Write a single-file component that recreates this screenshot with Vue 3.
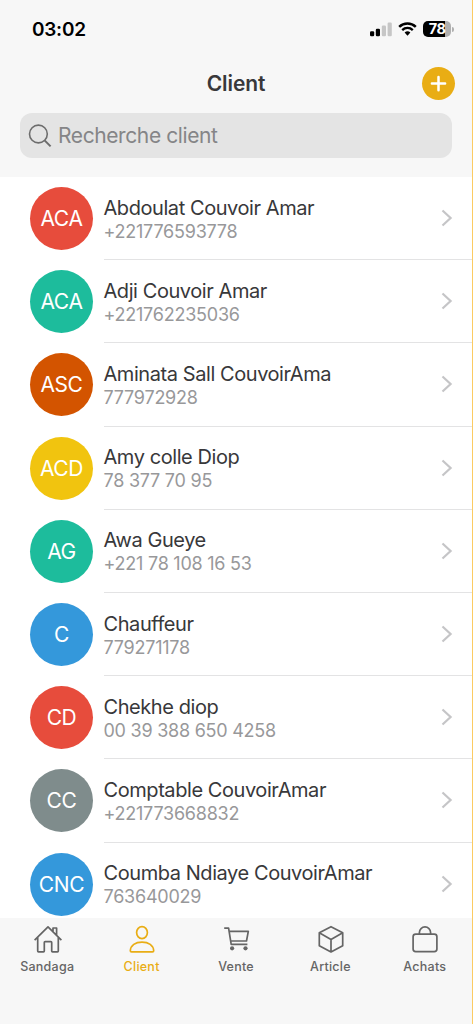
<script setup>
const clients = [
  { initials: 'ACA', name: 'Abdoulat Couvoir Amar', phone: '+221776593778', tone: 'red' },
  { initials: 'ACA', name: 'Adji Couvoir Amar', phone: '+221762235036', tone: 'green' },
  { initials: 'ASC', name: 'Aminata Sall CouvoirAma', phone: '777972928', tone: 'orange' },
  { initials: 'ACD', name: 'Amy colle Diop', phone: '78 377 70 95', tone: 'yellow' },
  { initials: 'AG', name: 'Awa Gueye', phone: '+221 78 108 16 53', tone: 'green' },
  { initials: 'C', name: 'Chauffeur', phone: '779271178', tone: 'blue' },
  { initials: 'CD', name: 'Chekhe diop', phone: '00 39 388 650 4258', tone: 'red' },
  { initials: 'CC', name: 'Comptable CouvoirAmar', phone: '+221773668832', tone: 'gray' },
  { initials: 'CNC', name: 'Coumba Ndiaye CouvoirAmar', phone: '763640029', tone: 'blue' },
]
</script>

<template>
  <div class="screen">
    <header class="top">
      <div class="status">
        <span class="time">03:02</span>
        <div class="indicators">
          <svg class="signal" width="22" height="15" viewBox="0 0 22 15">
            <rect x="0" y="9.3" width="4.2" height="4.9" rx="1.2" fill="#000" />
            <rect x="5.8" y="6.8" width="4.2" height="7.4" rx="1.2" fill="#000" />
            <rect x="11.8" y="3.6" width="4.2" height="10.6" rx="1.2" fill="#c6c6c6" />
            <rect x="17.6" y="0.5" width="4.2" height="13.7" rx="1.2" fill="#c6c6c6" />
          </svg>
          <svg class="wifi" width="19" height="14" viewBox="0 0 19 14">
            <path d="M1.2 4.9a12 12 0 0 1 16.6 0" fill="none" stroke="#000" stroke-width="2.5" />
            <path d="M4.2 8.1a7.6 7.6 0 0 1 10.6 0" fill="none" stroke="#000" stroke-width="2.3" />
            <path d="M6.6 10.6a4.3 4.3 0 0 1 5.8 0L9.5 13.7Z" fill="#000" />
          </svg>
          <div class="battery"><span class="level">78</span></div>
          <span class="tip"></span>
        </div>
      </div>
      <div class="titlebar">
        <h1>Client</h1>
        <button class="add" aria-label="Ajouter">
          <svg width="33" height="33" viewBox="0 0 33 33"><path d="M16.5 10v13.2M9.9 16.6h13.2" stroke="#fff" stroke-width="2.5" stroke-linecap="round" /></svg>
        </button>
      </div>
      <div class="search">
        <svg width="24" height="24" viewBox="0 0 24 24" fill="none" stroke="#6d6d6d" stroke-width="1.6">
          <circle cx="10.4" cy="10" r="8.9" />
          <path d="M16.6 16.4l6 6" stroke-width="2" />
        </svg>
        <span>Recherche client</span>
      </div>
    </header>

    <main class="list">
      <div v-for="client in clients" :key="client.name" class="row">
        <div class="avatar" :class="client.tone">{{ client.initials }}</div>
        <div class="body">
          <div>
            <div class="name">{{ client.name }}</div>
            <div class="phone">{{ client.phone }}</div>
          </div>
          <svg class="chevron" width="12" height="18" viewBox="0 0 12 18"><path d="M1.5 1.5L9.6 9l-8.1 7.5" fill="none" stroke="#c5c5c7" stroke-width="2.2" /></svg>
        </div>
      </div>
    </main>

    <nav class="tabs">
      <div class="tab">
        <svg width="30" height="30" viewBox="0 0 30 30">
          <path d="M1.6 15.1L15 1.9l13.4 13.2M4.7 12.5v13.6q0 .8.8.8h5q.8 0 .8-.8V17.5q0-.8.8-.8h5.8q.8 0 .8.8v8.6q0 .8.8.8h5q.8 0 .8-.8V12.5M20 6.3V3h3.6v7.1" />
        </svg>
        <span>Sandaga</span>
      </div>
      <div class="tab active">
        <svg width="30" height="30" viewBox="0 0 30 30">
          <ellipse cx="15" cy="7.6" rx="5.4" ry="6" />
          <path d="M3.3 25.8C3.6 20.4 8.4 17.1 15 17.1s11.4 3.3 11.7 8.7q0 1.1-1.2 1.1h-21q-1.2 0-1.2-1.1Z" />
        </svg>
        <span>Client</span>
      </div>
      <div class="tab">
        <svg width="30" height="30" viewBox="0 0 30 30">
          <path d="M2.2 3.2h4.4l2.6 16.2h16.2M7.1 6.3h19.2l-1.8 9.7H8.7" />
          <circle class="wheel" cx="10.1" cy="23.3" r="2.1" />
          <circle class="wheel" cx="23.5" cy="23.3" r="2.1" />
        </svg>
        <span>Vente</span>
      </div>
      <div class="tab">
        <svg width="30" height="30" viewBox="0 0 30 30">
          <path d="M15 1.7l11.7 6.1v12.9L15 27 3.3 20.7V7.8ZM3.3 7.8L15 14.4l11.7-6.6M15 14.4V27" />
        </svg>
        <span>Article</span>
      </div>
      <div class="tab">
        <svg width="30" height="30" viewBox="0 0 30 30">
          <rect x="3.1" y="9.2" width="23.8" height="17.4" rx="2.6" />
          <path d="M9.4 9.2V7.5a5.6 5.6 0 0 1 11.2 0v1.7" />
        </svg>
        <span>Achats</span>
      </div>
    </nav>
  </div>
</template>

<style>
body { margin: 0; }
</style>

<style scoped>
.screen {
  box-sizing: border-box;
  width: 473px;
  height: 1024px;
  display: flex;
  flex-direction: column;
  overflow: hidden;
  background: #fff;
  border-right: 1px solid #fbcb62;
  font-family: Inter, "Liberation Sans", sans-serif;
  color: #38383a;
}
.top { flex: none; height: 177px; background: #f7f7f7; }
.status {
  height: 58px;
  padding: 0 18px 0 32px;
  display: flex;
  align-items: center;
  justify-content: space-between;
}
.time { color: #000; font-size: 19px; font-weight: 600; letter-spacing: -0.25px; }
.indicators { display: flex; align-items: center; }
.wifi { margin-left: 6px; }
.battery {
  width: 28px;
  height: 16px;
  margin-left: 6px;
  border-radius: 5px;
  background: linear-gradient(90deg, #000 78%, #b0b0b0 78%);
  color: #fff;
  text-align: center;
}
.level { display: block; font-size: 14.5px; line-height: 16px; font-weight: 700; letter-spacing: -0.5px; }
.tip { width: 2px; height: 5px; margin-left: 1px; border-radius: 0 2px 2px 0; background: #b0b0b0; }
.titlebar {
  box-sizing: border-box;
  height: 55px;
  padding: 0 17px 4px;
  display: grid;
  grid-template-columns: 33px 1fr 33px;
  align-items: center;
}
h1 { grid-column: 2; margin: 0; text-align: center; font-size: 21px; line-height: 24px; font-weight: 600; letter-spacing: -0.1px; }
.add { width: 33px; height: 33px; padding: 0; border: 0; border-radius: 50%; background: #e9ad14; }
.add svg { display: block; }
.search {
  box-sizing: border-box;
  width: 432px;
  height: 45px;
  margin: 0 0 0 20px;
  padding-left: 8px;
  display: flex;
  align-items: center;
  gap: 6px;
  border-radius: 12px;
  background: #e4e4e4;
  color: #858587;
  font-size: 21px;
  letter-spacing: -0.4px;
}
.list { flex: none; height: 741px; overflow: hidden; }
.row { height: 83.2px; padding-left: 30px; display: flex; gap: 10.5px; }
.avatar {
  flex: none;
  width: 63px;
  height: 63px;
  margin-top: 10px;
  border-radius: 50%;
  color: #fff;
  font-size: 21px;
  line-height: 64px;
  letter-spacing: -0.4px;
  text-align: center;
}
.red { background: #e74c3c; }
.green { background: #1dbc9c; }
.orange { background: #d35400; }
.yellow { background: #f1c40f; }
.blue { background: #3498db; }
.gray { background: #7f8c8c; }
.body {
  box-sizing: border-box;
  flex: 1;
  height: 83.2px;
  padding-right: 19px;
  display: flex;
  align-items: center;
  justify-content: space-between;
  border-bottom: 1px solid #e3e3e4;
}
.name { padding-top: 2px; font-size: 20px; line-height: 25px; letter-spacing: -0.43px; white-space: nowrap; }
.phone { font-size: 18px; line-height: 22px; letter-spacing: -0.24px; color: #98989a; white-space: nowrap; }
.tabs { flex: 1; display: flex; background: #f7f7f7; }
.tab {
  flex: 1;
  padding-top: 7px;
  display: flex;
  flex-direction: column;
  align-items: center;
  color: #656565;
}
.tab svg { margin-left: 1px; fill: none; stroke: currentColor; stroke-width: 1.7; stroke-linejoin: round; }
.tab .wheel { fill: currentColor; stroke: none; }
.tab span { margin-top: 4px; font-size: 12.5px; line-height: 16px; font-weight: 500; letter-spacing: 0.25px; }
.active.tab { color: #e9ad14; }
</style>
